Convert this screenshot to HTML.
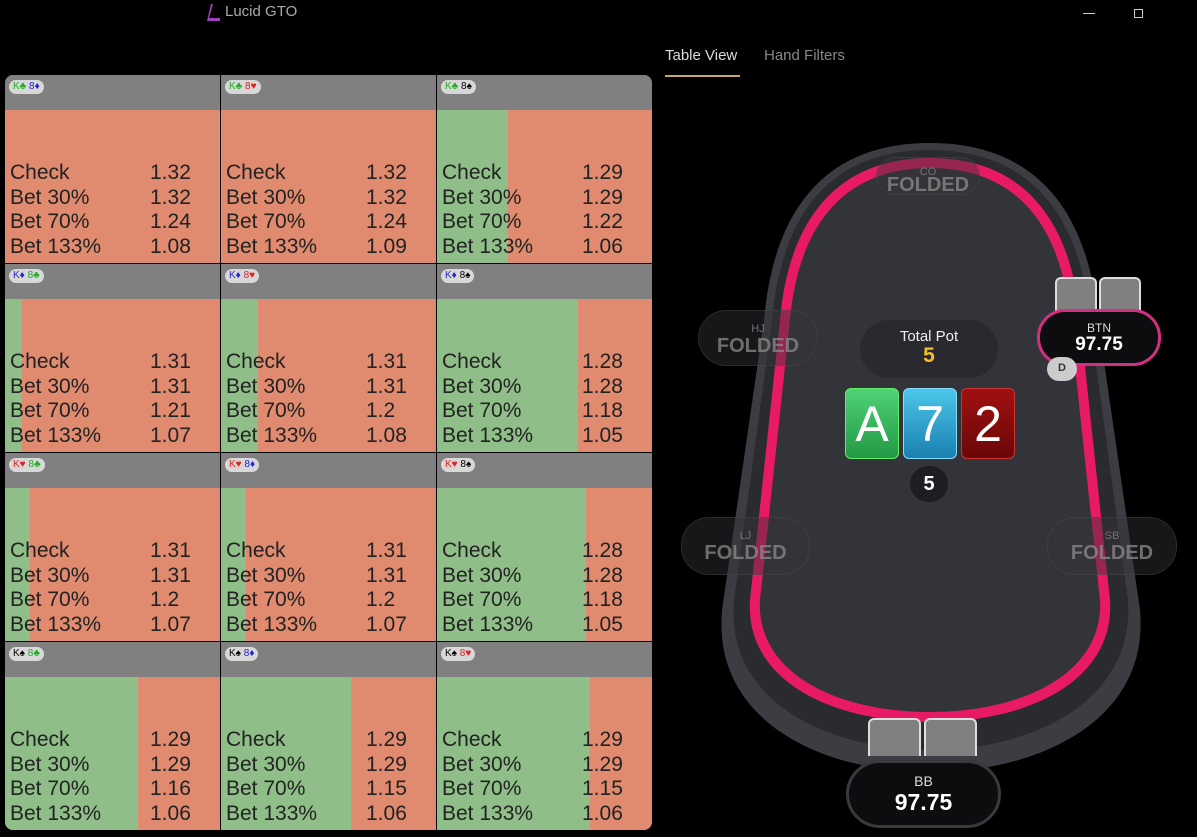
<!DOCTYPE html>
<html><head><meta charset="utf-8"><style>
*{margin:0;padding:0;box-sizing:border-box}
body{width:1197px;height:837px;background:#000;position:relative;overflow:hidden;font-family:"Liberation Sans",sans-serif;color:#fff}
.a{position:absolute}
.grid{position:absolute;left:5px;top:75px;width:647px;height:755px;border-radius:8px;overflow:hidden;background:#000}
.cell{position:absolute;width:215px;height:188px;background:#e08b6f;overflow:hidden}
.hd{position:absolute;left:0;top:0;width:100%;height:35px;background:#808080}
.gr{position:absolute;left:0;top:35px;bottom:0;background:#8fbe88}
.tag{position:absolute;left:4px;top:5px;height:14px;padding:0 4px;border-radius:7px;background:#d8d8d8;font-size:10px;line-height:14px;color:#000}
.rows{position:absolute;left:5px;top:86px;font-size:21px;line-height:24.5px;color:#222;font-weight:300}
.rows div{position:relative;width:200px}
.rows span{position:absolute;left:140px}
.fold{position:absolute;border-radius:28px;background:rgba(50,50,56,.45);border:1px solid rgba(80,80,86,.35);text-align:center;color:rgba(140,140,140,.75)}
.fold .p{font-size:11px;line-height:12px;margin-top:8px}
.fold .f{font-size:20px;font-weight:bold;line-height:22px}
.card{position:absolute;top:388px;width:54px;height:71px;border-radius:6px;font-size:50px;line-height:71px;text-align:center;color:#fff}
.hc{position:absolute;width:42px;height:38px;background:#808080;border:2px solid #ddd;border-bottom:none;border-radius:6px 6px 0 0}
</style></head><body>
<div class="a" style="left:207px;top:3px;width:12px;height:18px">
<svg width="14" height="18"><path d="M6 1 L2 15 L13 15 L13 18 L0 18 L4 1Z" fill="#a040c0"/></svg></div>
<div class="a" style="left:225px;top:3px;font-size:15px;color:#aaa">Lucid GTO</div>
<div class="a" style="left:1083px;top:13px;width:12px;height:1px;background:#ccc"></div>
<div class="a" style="left:1134px;top:9px;width:9px;height:9px;border:1px solid #ccc"></div>
<div class="a" style="left:665px;top:47px;font-size:15px;color:#ddd">Table View</div>
<div class="a" style="left:764px;top:47px;font-size:15px;color:#888">Hand Filters</div>
<div class="a" style="left:665px;top:75px;width:75px;height:2px;background:#c9a66b"></div>

<div class="grid">
<div class="cell" style="left:0;top:0"><div class="hd"></div><div class="tag"><span style="color:#2a2">K♣</span> <span style="color:#22c">8♦</span></div><div class="rows"><div>Check<span>1.32</span></div><div>Bet 30%<span>1.32</span></div><div>Bet 70%<span>1.24</span></div><div>Bet 133%<span>1.08</span></div></div></div>
<div class="cell" style="left:216px;top:0"><div class="hd"></div><div class="tag"><span style="color:#2a2">K♣</span> <span style="color:#d22">8♥</span></div><div class="rows"><div>Check<span>1.32</span></div><div>Bet 30%<span>1.32</span></div><div>Bet 70%<span>1.24</span></div><div>Bet 133%<span>1.09</span></div></div></div>
<div class="cell" style="left:432px;top:0"><div class="hd"></div><div class="gr" style="width:71px"></div><div class="tag"><span style="color:#2a2">K♣</span> <span style="color:#000">8♠</span></div><div class="rows"><div>Check<span>1.29</span></div><div>Bet 30%<span>1.29</span></div><div>Bet 70%<span>1.22</span></div><div>Bet 133%<span>1.06</span></div></div></div>
<div class="cell" style="left:0;top:189px"><div class="hd"></div><div class="gr" style="width:17px"></div><div class="tag"><span style="color:#22c">K♦</span> <span style="color:#2a2">8♣</span></div><div class="rows"><div>Check<span>1.31</span></div><div>Bet 30%<span>1.31</span></div><div>Bet 70%<span>1.21</span></div><div>Bet 133%<span>1.07</span></div></div></div>
<div class="cell" style="left:216px;top:189px"><div class="hd"></div><div class="gr" style="width:37px"></div><div class="tag"><span style="color:#22c">K♦</span> <span style="color:#d22">8♥</span></div><div class="rows"><div>Check<span>1.31</span></div><div>Bet 30%<span>1.31</span></div><div>Bet 70%<span>1.2</span></div><div>Bet 133%<span>1.08</span></div></div></div>
<div class="cell" style="left:432px;top:189px"><div class="hd"></div><div class="gr" style="width:141px"></div><div class="tag"><span style="color:#22c">K♦</span> <span style="color:#000">8♠</span></div><div class="rows"><div>Check<span>1.28</span></div><div>Bet 30%<span>1.28</span></div><div>Bet 70%<span>1.18</span></div><div>Bet 133%<span>1.05</span></div></div></div>
<div class="cell" style="left:0;top:378px"><div class="hd"></div><div class="gr" style="width:25px"></div><div class="tag"><span style="color:#d22">K♥</span> <span style="color:#2a2">8♣</span></div><div class="rows"><div>Check<span>1.31</span></div><div>Bet 30%<span>1.31</span></div><div>Bet 70%<span>1.2</span></div><div>Bet 133%<span>1.07</span></div></div></div>
<div class="cell" style="left:216px;top:378px"><div class="hd"></div><div class="gr" style="width:25px"></div><div class="tag"><span style="color:#d22">K♥</span> <span style="color:#22c">8♦</span></div><div class="rows"><div>Check<span>1.31</span></div><div>Bet 30%<span>1.31</span></div><div>Bet 70%<span>1.2</span></div><div>Bet 133%<span>1.07</span></div></div></div>
<div class="cell" style="left:432px;top:378px"><div class="hd"></div><div class="gr" style="width:149px"></div><div class="tag"><span style="color:#d22">K♥</span> <span style="color:#000">8♠</span></div><div class="rows"><div>Check<span>1.28</span></div><div>Bet 30%<span>1.28</span></div><div>Bet 70%<span>1.18</span></div><div>Bet 133%<span>1.05</span></div></div></div>
<div class="cell" style="left:0;top:567px"><div class="hd"></div><div class="gr" style="width:133px"></div><div class="tag"><span style="color:#000">K♠</span> <span style="color:#2a2">8♣</span></div><div class="rows"><div>Check<span>1.29</span></div><div>Bet 30%<span>1.29</span></div><div>Bet 70%<span>1.16</span></div><div>Bet 133%<span>1.06</span></div></div></div>
<div class="cell" style="left:216px;top:567px"><div class="hd"></div><div class="gr" style="width:130px"></div><div class="tag"><span style="color:#000">K♠</span> <span style="color:#22c">8♦</span></div><div class="rows"><div>Check<span>1.29</span></div><div>Bet 30%<span>1.29</span></div><div>Bet 70%<span>1.15</span></div><div>Bet 133%<span>1.06</span></div></div></div>
<div class="cell" style="left:432px;top:567px"><div class="hd"></div><div class="gr" style="width:153px"></div><div class="tag"><span style="color:#000">K♠</span> <span style="color:#d22">8♥</span></div><div class="rows"><div>Check<span>1.29</span></div><div>Bet 30%<span>1.29</span></div><div>Bet 70%<span>1.15</span></div><div>Bet 133%<span>1.06</span></div></div></div>
</div>

<svg class="a" style="left:0;top:0" width="1197" height="837">
<path d="M930 143 C1050 143 1090 230 1098 320 L1140 610 C1150 720 1040 772 930 772 C820 772 712 720 722 610 L764 320 C772 230 810 143 930 143Z" fill="#3c3d42"/>
<path d="M930 150 C1043 150 1082 232 1090 320 L1128 600 C1135 700 1035 750 930 750 C825 750 725 700 734 600 L772 320 C780 232 817 150 930 150Z" fill="#2a2b30"/>
<path d="M930 158 C1035 158 1073 236 1080 320 L1110 600 C1115 680 1030 722 930 722 C830 722 745 680 750 600 L780 320 C787 236 825 158 930 158Z" fill="#e81a66"/>
<path d="M930 168 C1027 168 1063 240 1070 320 L1100 600 C1104 672 1025 712 930 712 C835 712 756 672 760 600 L790 320 C797 240 833 168 930 168Z" fill="#33333a"/>
</svg>

<div class="fold" style="left:876px;top:157px;width:104px;height:38px"><div class="p">CO</div><div class="f" style="margin-top:-4px">FOLDED</div></div>
<div class="fold" style="left:698px;top:310px;width:120px;height:56px"><div class="p" style="margin-top:12px">HJ</div><div class="f">FOLDED</div></div>
<div class="fold" style="left:681px;top:517px;width:129px;height:58px"><div class="p" style="margin-top:12px">LJ</div><div class="f">FOLDED</div></div>
<div class="fold" style="left:1047px;top:517px;width:130px;height:58px"><div class="p" style="margin-top:12px">SB</div><div class="f">FOLDED</div></div>

<div class="a" style="left:860px;top:320px;width:138px;height:58px;border-radius:29px;background:#2a2a2e;text-align:center">
<div style="font-size:15px;margin-top:8px;color:#eee">Total Pot</div><div style="font-size:21px;font-weight:bold;color:#f0c030;line-height:22px">5</div></div>
<div class="card" style="left:845px;background:linear-gradient(#4fd277,#229944);border:1px solid #6e6">A</div>
<div class="card" style="left:903px;background:linear-gradient(#4cc6ea,#1a80b0);border:1px solid #8df">7</div>
<div class="card" style="left:961px;background:linear-gradient(#a01010,#6a0808);border:1px solid #c33">2</div>
<div class="a" style="left:910px;top:466px;width:38px;height:36px;border-radius:18px;background:#1e1e22;text-align:center;font-size:20px;font-weight:bold;line-height:36px">5</div>

<div class="hc" style="left:1055px;top:277px"></div><div class="hc" style="left:1099px;top:277px"></div>
<div class="a" style="left:1037px;top:309px;width:124px;height:57px;border-radius:28px;background:#0d0d0f;border:3px solid #d03080;text-align:center">
<div style="font-size:12px;margin-top:9px;color:#ddd">BTN</div><div style="font-size:19px;font-weight:bold;line-height:20px">97.75</div></div>
<div class="a" style="left:1047px;top:357px;width:30px;height:24px;border-radius:15px;background:#ccc;color:#333;font-size:11px;font-weight:bold;text-align:center;line-height:22px">D</div>

<div class="hc" style="left:868px;top:718px;width:53px"></div><div class="hc" style="left:924px;top:718px;width:53px"></div>
<div class="a" style="left:846px;top:760px;width:155px;height:68px;border-radius:34px;background:#0d0d0f;border:3px solid #3a3a3e;text-align:center">
<div style="font-size:14px;margin-top:10px;color:#ddd">BB</div><div style="font-size:23px;font-weight:bold;line-height:26px">97.75</div></div>
</body></html>
